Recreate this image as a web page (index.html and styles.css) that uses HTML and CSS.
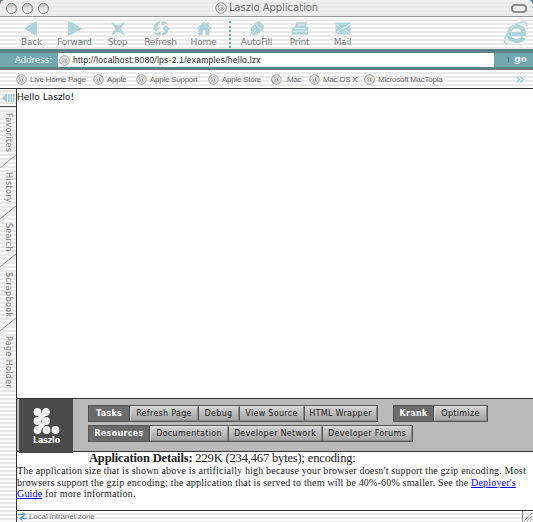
FILE: index.html
```
<!DOCTYPE html>
<html lang="en">
<head>
<meta charset="utf-8">
<title>Laszlo Application</title>
<link rel="stylesheet" href="styles.css">
</head>
<body>
<svg class="defs" width="0" height="0">
  <symbol id="at" viewBox="0 0 12 12"><circle cx="6" cy="6" r="5.2" fill="#f4f4f4" stroke="#999"/><circle cx="6" cy="6" r="2.9" fill="none" stroke="#aaa" stroke-width=".8"/><path d="M7.2 4.5v3M7 5.9a1.2 1.2 0 1 1-2.2 0 1.2 1.2 0 0 1 2.2 0" fill="none" stroke="#888" stroke-width=".7"/></symbol>
</svg>
<div class="window">
  <header class="titlebar">
    <div class="lights"><i></i><i></i><i></i></div>
    <div class="title"><svg width="12" height="12"><use href="#at"/></svg><span>Laszlo Application</span></div>
    <i class="pill"></i>
  </header>
  <nav class="toolbar">
    <div class="tool"><svg viewBox="0 0 18 15"><path d="M1 7.500 11 1 14 .5v14l-3-.5z"/></svg><span>Back</span></div>
    <div class="tool"><svg viewBox="0 0 18 15"><path d="M16 7.500 5 1 2 .5v14l3-.5z"/></svg><span>Forward</span></div>
    <div class="tool"><svg viewBox="0 0 18 15"><path d="M2 .5 9 4.500 16 .5l-4 7 4 7-7-4-7 4 4-7z"/></svg><span>Stop</span></div>
    <div class="tool"><svg viewBox="0 0 18 15"><path d="M8 .5C4 .5 2 3 2 6.500H0l4 4.500 4-4.500H5.500C5.500 4.500 6 3 8 3zM10 14.500c4 0 6-2.500 6-6h2L14 4l-4 4.500h2.500c0 2-.5 3.500-2.500 3.500zM9.500 1c3-1 5 0 6 2.500l-3-.5-3 1.500zM8.500 14c-3 1-5 0-6-2.500l3 .5 3-1.500z"/></svg><span>Refresh</span></div>
    <div class="tool"><svg viewBox="0 0 18 15"><path d="M1 8 9 .5l2.500 2.500V1.500h2.500V5l3 3h-2.500v6.500h-4V9.500h-3v5h-4V8z"/></svg><span>Home</span></div>
    <i class="divider"></i>
    <div class="tool"><svg viewBox="0 0 18 15"><path d="M2.500 14.500 3 7 8 1.500l3-1.500 5 5-1 4-5.500 4.500z"/><path class="line" d="m3 14 5-5M7 2.500l6.500 6.500"/></svg><span>AutoFill</span></div>
    <div class="tool"><svg viewBox="0 0 20 15"><path d="M6 .5h12l-2 6h3v8H1v-7l3-1z"/><path class="line" d="M7 3.500h8M4 7.500h12M2 10.500h16"/></svg><span>Print</span></div>
    <div class="tool"><svg viewBox="0 0 18 15"><path d="M1.500 1.500h15v12h-15z"/><path class="line" d="m2 3 6.500 5L16 3M2 13l5-5m9 5-5-5"/></svg><span>Mail</span></div>
    <svg class="explorer" viewBox="0 0 26 26"><path d="M20.500 17.500c-1.500 2.500-4 3.500-7 3.500-5 0-7.500-3-7.500-7 0-4.500 3-7.500 7.500-7.500s7.500 3 7.300 7.500H9" fill="none" stroke="#a9d3db" stroke-width="4.200"/><path d="M5 23.500C-1 26 1 13 11 6 18 1 25 0 23.500 6" fill="none" stroke="#b8dce2" stroke-width="1.700"/></svg>
  </nav>
  <div class="address">
    <label>Address:</label>
    <div class="field"><svg width="11" height="11"><use href="#at"/></svg><span>http://localhost:8080/lps-2.1/examples/hello.lzx</span></div>
    <b class="go"><i>)</i>go</b>
  </div>
  <nav class="favorites">
    <a class="f1"><svg><use href="#at"/></svg><span>Live Home Page</span></a>
    <a class="f2"><svg><use href="#at"/></svg><span>Apple</span></a>
    <a class="f3"><svg><use href="#at"/></svg><span>Apple Support</span></a>
    <a class="f4"><svg><use href="#at"/></svg><span>Apple Store</span></a>
    <a class="f5"><svg><use href="#at"/></svg><span>.Mac</span></a>
    <a class="f6"><svg><use href="#at"/></svg><span>Mac OS X</span></a>
    <a class="f7"><svg><use href="#at"/></svg><span>Microsoft MacTopia</span></a>
    <svg class="more" viewBox="0 0 9 7"><path d="m.5.500 3 3-3 3m4-6 3 3-3 3" fill="none" stroke="#98cbd3" stroke-width="1.300"/></svg>
  </nav>
  <div class="main">
    <aside class="sidebar">
      <div class="collapse"><svg width="14" height="12"><path d="M1 6 6 1v10zM7 2h1.500v8H7zM9.500 2H11v8H9.500zM12 2h1.500v8H12z" fill="#a9cdd3"/></svg></div>
      <div class="tab t1"><span>Favorites</span></div>
      <svg class="slant" viewBox="0 0 16 13"><path d="M0 13 16 0" stroke="#999"/></svg>
      <div class="tab t2"><span>History</span></div>
      <svg class="slant" viewBox="0 0 16 13"><path d="M0 13 16 0" stroke="#999"/></svg>
      <div class="tab t3"><span>Search</span></div>
      <svg class="slant" viewBox="0 0 16 13"><path d="M0 13 16 0" stroke="#999"/></svg>
      <div class="tab t4"><span>Scrapbook</span></div>
      <svg class="slant" viewBox="0 0 16 13"><path d="M0 13 16 0" stroke="#999"/></svg>
      <div class="tab t5"><span>Page Holder</span></div>
    </aside>
    <div class="content">
      <div class="canvas"><span>Hello Laszlo!</span></div>
      <section class="panel">
        <div class="logo">
          <svg width="28" height="27" viewBox="0 0 28 27" fill="#f4f4f4"><path d="m4.500 13 8.500-9M4.500 22l8.500-9" stroke="#f4f4f4" stroke-width="5"/><circle cx="4.500" cy="4" r="3.900"/><circle cx="13" cy="4" r="3.900"/><circle cx="4.500" cy="13" r="3.900"/><circle cx="13" cy="13" r="3.900"/><circle cx="4.500" cy="22" r="3.900"/><circle cx="13.500" cy="22" r="3.900"/><circle cx="22.500" cy="22" r="3.900"/></svg>
          <span>Laszlo</span>
        </div>
        <div class="rows">
          <div class="row">
            <div class="group"><b class="w41">Tasks</b><a class="w68">Refresh Page</a><a class="w41">Debug</a><a class="w65">View Source</a><a class="w74">HTML Wrapper</a></div>
            <div class="group"><b class="w40">Krank</b><a class="w54">Optimize</a></div>
          </div>
          <div class="row">
            <div class="group"><b class="w61">Resources</b><a class="w79">Documentation</a><a class="w94">Developer Network</a><a class="w89">Developer Forums</a></div>
          </div>
        </div>
      </section>
      <section class="details">
        <h1><b>Application Details:</b> 229K (234,467 bytes); encoding:</h1>
        <p><span>The application size that is shown above is artificially high because your browser doesn't support the gzip encoding. Most</span><br><span>browsers support the gzip encoding; the application that is served to them will be 40%-60% smaller. See the <a>Deployer's</a></span><br><span><a>Guide</a> for more information.</span></p>
      </section>
      <footer class="status">
        <svg width="9" height="9" viewBox="0 0 9 9"><path d="M0 2.500h6M4.500.5l2.500 2-2.500 2M9 6.500H3M4.500 4.500 2 6.500l2.500 2" fill="none" stroke="#6f9bd0" stroke-width="1.300"/></svg>
        <span>Local intranet zone</span>
        <svg class="grip" width="10" height="11" viewBox="0 0 10 11"><path d="m1 10 8-8M4 10l5-5M7 10l2-2" stroke="#999"/></svg>
      </footer>
    </div>
  </div>
</div>
</body>
</html>
```
FILE: styles.css
```
* { box-sizing: border-box; }
body { margin: 0; width: 533px; height: 522px; overflow: hidden; background: #5f8185; font-family: "Liberation Sans", sans-serif; color: #222; }
svg { display: block; flex: none; }
.defs { position: absolute; }
span, b, a { white-space: nowrap; }
.window { display: flex; flex-direction: column; height: 522px; }

.titlebar { height: 17px; flex: none; display: grid; grid-template-columns: 60px 1fr 60px; align-items: center; border-bottom: 1px solid #999; background: repeating-linear-gradient(#efefef 0 2px, #e9e9e9 2px 4px); border-radius: 5px 5px 0 0; }
.lights { display: flex; gap: 5px; padding-left: 6px; }
.lights i { width: 11px; height: 11px; border-radius: 50%; border: 1px solid #808080; background: linear-gradient(#bbb, #fff); }
.title { display: flex; justify-content: center; align-items: center; gap: 2px; font: 10px/14px "DejaVu Sans", sans-serif; letter-spacing: -.05px; color: #707070; }
.pill { justify-self: end; margin-right: 6px; width: 16px; height: 9px; border: 2px solid #8d8d8d; border-radius: 4px; background: #eee; }

.toolbar { height: 32px; flex: none; display: flex; padding: 4px 0 0 10px; background: repeating-linear-gradient(#fff 0 2px, #e9e9e9 2px 4px); }
.tool { width: 43px; display: flex; flex-direction: column; align-items: center; gap: 1px; font: 9px/11px "DejaVu Sans", sans-serif; letter-spacing: -.2px; color: #848484; }
.tool svg { width: 18px; height: 15px; fill: #afd4db; }
.tool .line { fill: none; stroke: #e0eff2; }
.divider { width: 2px; margin: 0 4px 1px; border-left: 2px dotted #64aab5; }
.explorer { width: 26px; height: 26px; margin: -1px 4px 0 auto; }

.address { height: 21px; flex: none; display: flex; align-items: center; background: #5f8185; border-bottom: 1px solid #777; padding: 4px 0 2px; }
.address label { width: 58px; height: 14px; padding-right: 6px; background: #70a8af; color: #e9f7f9; text-align: right; font: 9px/14px "DejaVu Sans", sans-serif; letter-spacing: -.2px; }
.field { width: 436px; height: 14px; display: flex; align-items: center; gap: 3px; padding-left: 1px; background: #fff; font-size: 8.500px; letter-spacing: .25px; color: #222; }
.go { flex: 1; height: 14px; background: #70a8af; color: #e9f7f9; font: bold 9px/12px "DejaVu Sans", sans-serif; text-align: right; padding-right: 6px; }
.go i { font: 7px/10px "DejaVu Sans", sans-serif; color: #456; margin-right: 5px; }

.favorites { height: 18px; flex: none; display: flex; align-items: center; padding-left: 16px; background: repeating-linear-gradient(#fff 0 2px, #e9e9e9 2px 4px); color: #6d6d6d; font-size: 8px; letter-spacing: -.25px; }
.favorites a { display: flex; align-items: center; gap: 3px; }
.favorites a svg { width: 11px; height: 11px; }
.f1 { width: 77px; } .f2 { width: 43px; } .f3 { width: 72px; } .f4 { width: 63px; } .f5 { width: 38px; } .f6 { width: 55px; }
.more { width: 9px; height: 7px; margin: 0 8px 0 auto; }

.main { flex: 1; min-height: 0; display: flex; }
.sidebar { width: 17px; border-right: 1px solid #333; background: repeating-linear-gradient(#f9f9f9 0 2px, #e7e7e7 2px 4px); display: flex; flex-direction: column; }
.collapse { height: 19px; border-top: 1px solid #333; border-bottom: 1px solid #444; padding: 3px 1px; }
.tab { display: flex; align-items: center; writing-mode: vertical-rl; justify-content: flex-start; font: 8px/16px "DejaVu Sans", sans-serif; letter-spacing: .35px; color: #808080; width: 16px; }
.t1 { height: 48px; padding-top: 6px; }
.t2 { height: 38px; padding-top: 4px; }
.t3 { height: 35px; padding-top: 4px; letter-spacing: .2px; }
.t4 { height: 51px; padding-top: 5px; }
.t5 { height: 76px; padding-top: 5px; }
.slant { width: 16px; height: 13px; }

.content { flex: 1; display: flex; flex-direction: column; background: #fff; }
.canvas { height: 310px; border-top: 1px solid #333; padding: 3px 0 0; font: 9px/11px "DejaVu Sans", sans-serif; color: #111; }
.panel { height: 54px; border-top: 1px solid #333; border-bottom: 1px solid #333; display: flex; background: #b9b9b9; }
.logo { width: 54px; height: 54px; margin: 0 0 0 2px; padding: 9px 0 0 14px; background: #4a4a4a; color: #fff; font: bold 8px/12px "DejaVu Sans", sans-serif; letter-spacing: -.2px; }
.rows { padding: 6px 0 0 15px; display: flex; flex-direction: column; gap: 3px; }
.row { display: flex; gap: 15px; }
.group { display: flex; border: 1px solid #555; height: 17px; }
.group a, .group b { display: block; text-align: center; font: 8px/14px "DejaVu Sans", sans-serif; letter-spacing: .3px; color: #222; }
.group a { background: linear-gradient(#d2d2d2, #a5a5a5); border: 1px solid #e0e0e0; border-right-color: #888; border-bottom-color: #888; line-height: 13px; }
.group a + a { border-left: 1px solid #555; }
.group b { background: #6b6b6b; color: #fff; font-weight: bold; border-right: 1px solid #444; line-height: 15px; }
.w40 { width: 40px; } .w41 { width: 41px; } .w54 { width: 53px; } .w61 { width: 61px; } .w65 { width: 65px; } .w68 { width: 68px; } .w74 { width: 73px; } .w79 { width: 78px; } .w89 { width: 90px; } .w94 { width: 94px; }

.details { height: 59px; border-bottom: 1px solid #333; font-family: "Liberation Serif", serif; }
.details h1 { margin: 0 0 0 72px; font-size: 12.500px; letter-spacing: -.16px; font-weight: normal; line-height: 13px; }
.details p { margin: 0; font-size: 10px; letter-spacing: .175px; line-height: 11.500px; }
.details a { color: #00f; text-decoration: underline; }
.status { flex: 1; display: flex; align-items: center; gap: 2px; padding-left: 1px; background: repeating-linear-gradient(#fff 0 2px, #e9e9e9 2px 4px); font-size: 8px; letter-spacing: -.1px; color: #777; }
.grip { margin-left: auto; border-left: 1px solid #888; width: 11px; }
```
